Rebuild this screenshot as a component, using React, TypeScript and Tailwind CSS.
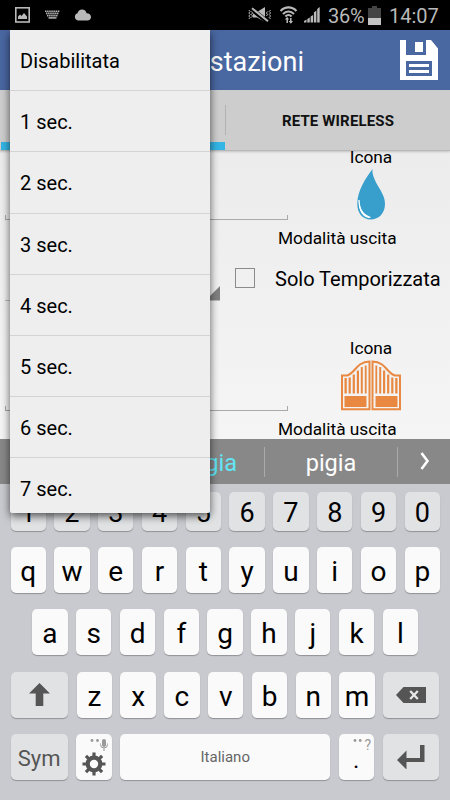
import type { ReactNode } from "react";

const delays = ["Disabilitata", "1 sec.", "2 sec.", "3 sec.", "4 sec.", "5 sec.", "6 sec.", "7 sec."];

function StatusBar() {
  return (
    <div className="flex h-[30px] shrink-0 items-center bg-black pl-[15px] pr-[11px] text-[#b9b9b9]">
      <svg width="15" height="16" viewBox="0 0 15 16" fill="none">
        <rect x="0.8" y="0.8" width="13.4" height="14.2" stroke="currentColor" strokeWidth="1.6" />
        <path d="M3 12V9.5l2-2 1.5 1.5L9 6l3 3.5V12z" fill="currentColor" />
      </svg>
      <svg className="ml-[15px] -mt-[1px]" width="15" height="9" viewBox="0 0 15 9" stroke="currentColor" fill="none">
        <path d="M0 1.2h15M1 3.4h13" strokeWidth="1.6" strokeDasharray="1.5 .6" />
        <path d="M2 5.6h11" strokeWidth="1.6" strokeDasharray="1.5 .6" />
        <path d="M3.5 7.9h8" strokeWidth="1.5" />
      </svg>
      <svg className="ml-[14px]" width="17" height="12" viewBox="0 0 17 12" fill="currentColor">
        <path d="M4 11.5a3.7 3.7 0 0 1-.5-7.2C4 1.800 5.800.5 8 .5c2.500 0 4.200 1.500 4.600 3.700C15.200 4.300 17 5.800 17 8c0 2.100-1.500 3.500-3.500 3.500z" />
      </svg>
      <div className="ml-auto flex items-center">
        <svg width="24" height="16" viewBox="0 0 24 16" fill="none" stroke="currentColor">
          <path d="M5 5h4l8-5v15L9 10.500H5z" fill="currentColor" stroke="none" />
          <path d="M3.500 2.200L20 15" stroke="#000" strokeWidth="4.500" />
          <path d="M4 1.200L20 14.300" strokeWidth="2" />
          <path d="M.8 3l1.400 1.500L.8 6l1.400 1.500L.8 9l1.400 1.500L.8 12M3.600 4.500L4.500 6 3.600 7.500 4.500 9l-.9 1.500M22.600 3l-1.400 1.500L22.600 6l-1.400 1.500L22.600 9l-1.400 1.500 1.400 1.500M19.400 4.500L18.500 6l.9 1.500-.9 1.500" strokeWidth="1" />
        </svg>
        <svg className="ml-[8px]" width="17" height="18" viewBox="0 0 17 18" fill="none" stroke="currentColor">
          <path d="M.6 5c4.500-4.800 11.300-4.800 15.800 0M3 8c3.200-3.400 7.800-3.400 11 0M5.400 10.500c1.900-2 4.300-2 6.200 0" strokeWidth="2.100" />
          <path d="M7.200 17v-5M10.800 12v5" strokeWidth="1.500" />
          <path d="M4.800 13.500L7.200 11l2 2.500zM8.600 15l2.200 2.700L13 15z" fill="currentColor" stroke="none" />
        </svg>
        <svg className="ml-[7px]" width="16" height="16" viewBox="0 0 16 16" fill="currentColor">
          <path d="M0 15.500v-1.500l2.500-1.500v3zM3.300 15.500v-3.600l2.500-1.500v5.100zM6.600 15.500V9.400l2.500-1.500v7.600zM9.900 15.500V5.500l2.500-2v12zM13.200 15.500V2l2.500-2v15.500z" />
        </svg>
        <span className="ml-[8px] w-[40px] pt-[2px] text-[20px] leading-[28px] tracking-[-0.3px]">36%</span>
        <svg width="13" height="19" viewBox="0 0 13 19">
          <path d="M4 0h5v2h4v10H0V2h4z" fill="#454545" />
          <path d="M0 12h13v7H0z" fill="#c4c4c4" />
        </svg>
        <span className="ml-[8px] w-[50px] pt-[2px] text-[20px] leading-[28px]">14:07</span>
      </div>
    </div>
  );
}

function Header() {
  return (
    <div className="flex h-[60px] shrink-0 items-center bg-[#4967a1] pr-[12px]">
      <span className="w-[304px] pt-[3px] text-right text-[27px] leading-[36px] text-white">Impostazioni</span>
      <svg className="ml-auto" width="38" height="40" viewBox="0 0 38 40">
        <path fill="#fff" fillRule="evenodd" d="M0 0h6v15h20V0h5l7 8.500V40H0zM6 21v15h26V21z" />
        <path fill="#fff" d="M15 2h8v10h-8zM9 24h20v3H9zM9 30h20v3H9z" />
      </svg>
    </div>
  );
}

function Tabs() {
  return (
    <div className="z-10 flex h-[61px] shrink-0 border-b border-[#b8b8b8] bg-[#cdcdcd] shadow-[0_1px_2px_rgba(0,0,0,0.18)]">
      <div className="flex w-[225px] flex-col justify-end pl-[1px]">
        <div className="h-[8px] bg-[#33b5e5]" />
      </div>
      <div className="mt-[15px] h-[30px] w-px bg-[#b2b2b2]" />
      <div className="flex flex-1 items-center justify-center pt-[2px] text-[15px] font-bold tracking-[0.15px] text-[#111]">
        RETE WIRELESS
      </div>
    </div>
  );
}

function Drop() {
  return (
    <svg width="28" height="51" viewBox="0 0 28 51">
      <path fill="#389fcd" d="M15.500 0C15 5 17 10 21 17c3.500 6 7 11 7 18 0 9-6 15.500-14.300 15.500C5.500 50.500.3 44 .3 35 .3 21 9 9 15.500 0z" />
      <path fill="#fff" d="M2.100 31c0 9 4.300 14.500 11.400 18C6.500 49 1 43 2.100 31z" />
      <path fill="none" stroke="#fff" strokeWidth="1.300" d="M2 31c0 9 3.500 15 11.500 17.500" />
    </svg>
  );
}

function GateLeaf() {
  return (
    <>
      <path fill="none" stroke="#e98941" strokeWidth="2" d="M1 15.500h4.500C13 15.500 15 1.500 28.500 1.500V49.200H1z" />
      <path fill="#e98941" d="M3.500 36h22v11h-22zM3.500 18h2.300v15.500H3.500zM7.600 17.500h2.200v16H7.600zM11.700 14.500h2.200v19h-2.200zM15.800 10.500H18v23h-2.200zM19.800 7h2v26.500h-2zM23.800 5.500h1.800v28h-1.800z" />
    </>
  );
}

function Gate() {
  return (
    <svg width="60" height="51" viewBox="0 0 60 51">
      <GateLeaf />
      <g transform="translate(60 0) scale(-1 1)">
        <GateLeaf />
      </g>
    </svg>
  );
}

function Output({ icon }: { icon: ReactNode }) {
  return (
    <div className="h-[190.500px] shrink-0">
      <div className="flex h-[73px]">
        <div className="ml-[5px] flex w-[283px] flex-col justify-end">
          <div className="h-[5px] border border-t-0 border-[#aaa]" />
        </div>
        <div className="ml-[53px] flex w-[60px] flex-col items-center">
          <span className="h-[22px] text-[17.300px] leading-[20px]">Icona</span>
          <div className="h-[51px]">{icon}</div>
        </div>
      </div>
      <div className="ml-[278px] flex h-[38px] w-[120px] items-center whitespace-nowrap text-[17.300px]">Modalità uscita</div>
      <div className="flex h-[43px] items-center">
        <div className="ml-[5px] flex h-full w-[215px] items-end justify-end border-b border-[#bbb]">
          <svg width="14" height="14" viewBox="0 0 14 14">
            <path fill="#808080" d="M14 0v14H0z" />
          </svg>
        </div>
        <div className="-mt-[3px] ml-[15px] size-[20px] border border-[#8b8b8b]" />
        <span className="-mt-[1px] ml-[20px] whitespace-nowrap text-[20px]">Solo Temporizzata</span>
      </div>
    </div>
  );
}

function Suggestions() {
  return (
    <div className="flex h-[45px] shrink-0 items-center bg-[#888889] text-[23.500px] leading-[30px] text-white">
      <span className="w-[237px] pt-[2px] text-right text-[#62e5f3]">pigia</span>
      <div className="ml-[27px] h-[30px] w-px bg-[#aaa]" />
      <span className="w-[132px] pt-[2px] text-center">pigia</span>
      <div className="h-[30px] w-px bg-[#aaa]" />
      <svg className="ml-[22px] -mt-[2px]" width="10" height="18" viewBox="0 0 10 18" fill="none" stroke="#fff" strokeWidth="2.600">
        <path d="M1.500 1l6 8-6 8" />
      </svg>
    </div>
  );
}

function Key({ children, gray, width }: { children: ReactNode; gray?: boolean; width?: string }) {
  return (
    <div
      className={`flex h-full shrink-0 items-center justify-center rounded-[5px] shadow-[0_1px_1px_rgba(0,0,0,0.28)] ${gray ? "bg-[#e1e2e4]" : "bg-[#fafafa]"} ${width ?? "w-[35.300px]"}`}
    >
      {children}
    </div>
  );
}

function Letters({ text }: { text: string }) {
  return (
    <>
      {text.split("").map((c) => (
        <Key key={c}>
          <span className="pt-[4px] text-[28px] leading-[32px]">{c}</span>
        </Key>
      ))}
    </>
  );
}

function Keyboard() {
  return (
    <div className="flex h-[316px] shrink-0 flex-col bg-[#c9cacf] pl-[10.500px] pt-[8px] text-black">
      <div className="flex h-[39px] gap-[8.500px]">
        {"1234567890".split("").map((c) => (
          <Key key={c} gray>
            <span className="pt-[2px] text-[27px] leading-[32px]">{c}</span>
          </Key>
        ))}
      </div>
      <div className="mt-[15.700px] flex h-[46.300px] gap-[8.500px]">
        <Letters text="qwertyuiop" />
      </div>
      <div className="mt-[16.200px] flex h-[46.300px] gap-[8.500px] pl-[21.800px]">
        <Letters text="asdfghjkl" />
      </div>
      <div className="mt-[16.200px] flex h-[46.300px] gap-[8.500px]">
        <Key gray width="w-[57.700px]">
          <svg width="21" height="23" viewBox="0 0 21 23" fill="#555">
            <path d="M10.500 0L21 10.500h-6.700V23H6.700V10.500H0z" />
          </svg>
        </Key>
        <Letters text="zxcvbnm" />
        <Key gray width="w-[56px]">
          <svg width="30" height="16" viewBox="0 0 30 16">
            <path fill="#555" d="M0 8L7.500 0H30v16H7.500z" />
            <path d="M14.200 4l7.600 8M21.800 4l-7.600 8" stroke="#e8e8e8" strokeWidth="2.300" />
          </svg>
        </Key>
      </div>
      <div className="mt-[16.200px] flex h-[46.300px] gap-[8.500px]">
        <Key gray width="w-[57.300px]">
          <span className="pt-[2px] text-[22px] text-[#555]">Sym</span>
        </Key>
        <Key>
          <svg width="35" height="46" viewBox="0 0 35 46">
            <g fill="#999">
              <circle cx="16" cy="6.500" r="1.400" />
              <circle cx="21.500" cy="6.500" r="1.400" />
              <rect x="26" y="5" width="4" height="8" rx="2" />
              <path d="M24.500 9.500v1a3.500 3.500 0 0 0 7 0v-1M28 14v3" fill="none" stroke="#999" />
            </g>
            <g transform="translate(18 30)">
              <circle r="6.300" fill="none" stroke="#555" strokeWidth="4.200" />
              <g stroke="#555" strokeWidth="3.200">
                <path d="M0-11.500v4M0 11.500v-4M-11.500 0h4M11.500 0h-4M-8.100-8.100l3 3M8.100-8.100l-3 3M-8.100 8.100l3-3M8.100 8.100l-3-3" />
              </g>
            </g>
          </svg>
        </Key>
        <Key width="w-[210.300px]">
          <span className="text-[15px] leading-[20px] text-[#666]">Italiano</span>
        </Key>
        <Key>
          <div className="flex h-full w-full flex-col">
            <div className="flex h-[18px] justify-end pr-[3px] pt-[3px] text-[14px] leading-[16px] text-[#999]">
              <svg className="mr-[2px]" width="10" height="7" viewBox="0 0 10 7" fill="#999">
                <circle cx="2" cy="3.500" r="1.400" />
                <circle cx="7.200" cy="3.500" r="1.400" />
              </svg>
              ?
            </div>
            <span className="pr-[1px] text-center text-[24px] leading-[16px]">.</span>
          </div>
        </Key>
        <Key gray width="w-[56.500px]">
          <svg width="28" height="24" viewBox="0 0 28 24" fill="#555">
            <path d="M0 15L9.500 5.500V13H23V0h4.500v17H9.500v7.500z" />
          </svg>
        </Key>
      </div>
    </div>
  );
}

function DelayMenu() {
  return (
    <div className="absolute left-[10px] top-[30px] z-20 h-[483px] w-[200px] overflow-hidden rounded-b-[2px] bg-[#eee] shadow-[0_3px_8px_rgba(0,0,0,0.65)]">
      {delays.map((d) => (
        <div
          key={d}
          className="flex h-[61.200px] items-center border-b border-[#d3d3d3] pl-[10px] pt-[2px] text-[20px] leading-[24px]"
        >
          {d}
        </div>
      ))}
    </div>
  );
}

export default function App() {
  return (
    <div className="relative flex h-[800px] w-[450px] flex-col overflow-hidden font-['Roboto',sans-serif] text-black">
      <StatusBar />
      <Header />
      <Tabs />
      <div className="h-[288px] shrink-0 overflow-hidden bg-linear-to-b from-[#ececec] to-[#f5f5f5]">
        <div className="-mt-[4px] flex flex-col">
          <Output icon={<Drop />} />
          <Output icon={<Gate />} />
        </div>
      </div>
      <Suggestions />
      <Keyboard />
      <DelayMenu />
    </div>
  );
}
